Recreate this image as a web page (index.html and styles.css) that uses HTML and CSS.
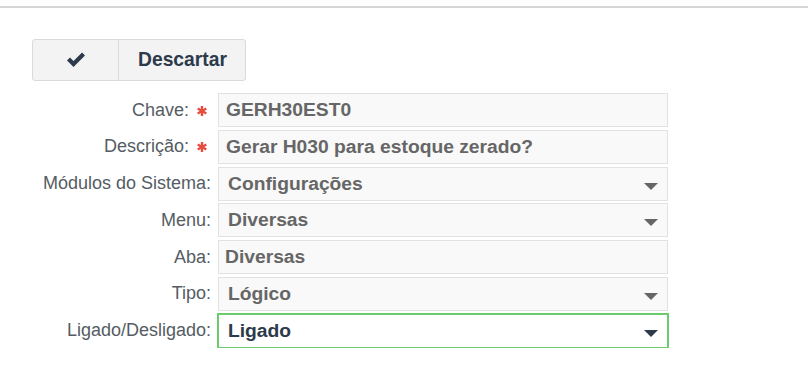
FILE: index.html
```html
<!DOCTYPE html>
<html lang="pt-BR">
<head>
    <meta charset="UTF-8">
    <meta name="viewport" content="width=device-width, initial-scale=1.0">
    <title>Parâmetro</title>
    <link rel="stylesheet" href="styles.css">
</head>
<body>
    <div class="topbar"></div>
    <div class="page">
        <div class="btn-group">
            <button class="btn btn-icon" type="button" title="Salvar">
                <svg width="20" height="16" viewBox="0 0 20 16">
                    <polyline points="2.5,8 7.5,13 17.5,3" fill="none" stroke="#2c3a4b" stroke-width="4.2"/>
                </svg>
            </button>
            <button class="btn" type="button">Descartar</button>
        </div>

        <form class="form">
            <div class="row">
                <label class="label">Chave: <span class="req"><svg width="10" height="10" viewBox="0 0 10 10"><g stroke="#e74c3c" stroke-width="2.4"><line x1="5" y1="0" x2="5" y2="10"/><line x1="0.7" y1="2.5" x2="9.3" y2="7.5"/><line x1="0.7" y1="7.5" x2="9.3" y2="2.5"/></g></svg></span></label>
                <div class="field">GERH30EST0</div>
            </div>
            <div class="row">
                <label class="label">Descrição: <span class="req"><svg width="10" height="10" viewBox="0 0 10 10"><g stroke="#e74c3c" stroke-width="2.4"><line x1="5" y1="0" x2="5" y2="10"/><line x1="0.7" y1="2.5" x2="9.3" y2="7.5"/><line x1="0.7" y1="7.5" x2="9.3" y2="2.5"/></g></svg></span></label>
                <div class="field">Gerar H030 para estoque zerado?</div>
            </div>
            <div class="row">
                <label class="label">Módulos do Sistema:</label>
                <div class="field select">Configurações<span class="caret"></span></div>
            </div>
            <div class="row">
                <label class="label">Menu:</label>
                <div class="field select">Diversas<span class="caret"></span></div>
            </div>
            <div class="row">
                <label class="label">Aba:</label>
                <div class="field plain">Diversas</div>
            </div>
            <div class="row">
                <label class="label">Tipo:</label>
                <div class="field select">Lógico<span class="caret"></span></div>
            </div>
            <div class="row">
                <label class="label">Ligado/Desligado:</label>
                <div class="field select focus">Ligado<span class="caret"></span></div>
            </div>
        </form>
    </div>
</body>
</html>
```

FILE: styles.css
```css
body {
    margin: 0;
    font-family: "Liberation Sans", Arial, sans-serif;
    background: #fff;
}
.topbar {
    height: 6px;
    border-bottom: 2px solid #d6d6d6;
}
.page {
    padding-top: 31px;
}
.btn-group {
    display: flex;
    margin-left: 32px;
    width: max-content;
    border: 1px solid #dadada;
    border-radius: 3px;
    background-color: #f3f3f3;
}
.btn {
    height: 40px;
    padding: 0 18px 0 19px;
    border: 0;
    background: transparent;
    font-family: inherit;
    font-size: 19.3px;
    font-weight: bold;
    color: #2c3a4b;
    cursor: pointer;
}
.btn-icon {
    width: 86px;
    padding: 2px 0 0 0;
    border-right: 1px solid #dadada;
}
.form {
    display: flex;
    flex-direction: column;
    gap: 2.8px;
    margin-top: 12px;
}
.row {
    display: flex;
    align-items: center;
    gap: 7px;
}
.label {
    width: 211px;
    text-align: right;
    font-size: 18px;
    color: #555c63;
}
.req {
    display: inline-block;
    margin: 0 4px 0 3px;
    vertical-align: 0;
}
.req svg {
    display: block;
}
.field {
    position: relative;
    box-sizing: border-box;
    width: 450px;
    height: 34px;
    padding: 0 0 0 7px;
    display: flex;
    align-items: center;
    border: 1px solid #e2e2e2;
    background-color: #f9f9f9;
    font-size: 19.25px;
    font-weight: bold;
    color: #666;
}
.field.plain {
    padding-left: 6px;
}
.field.select {
    padding-left: 9px;
}
.caret {
    position: absolute;
    right: 9px;
    top: 15px;
    width: 0;
    height: 0;
    border-left: 7px solid transparent;
    border-right: 7px solid transparent;
    border-top: 7px solid #666;
}
.field.focus {
    width: 452px;
    height: 36px;
    margin: -1px 0 -1px -1px;
    background-color: #fff;
    border: 2px solid #6ccb6c;
    color: #2c3a4b;
}
.field.focus .caret {
    border-top-color: #2c3a4b;
}
```
